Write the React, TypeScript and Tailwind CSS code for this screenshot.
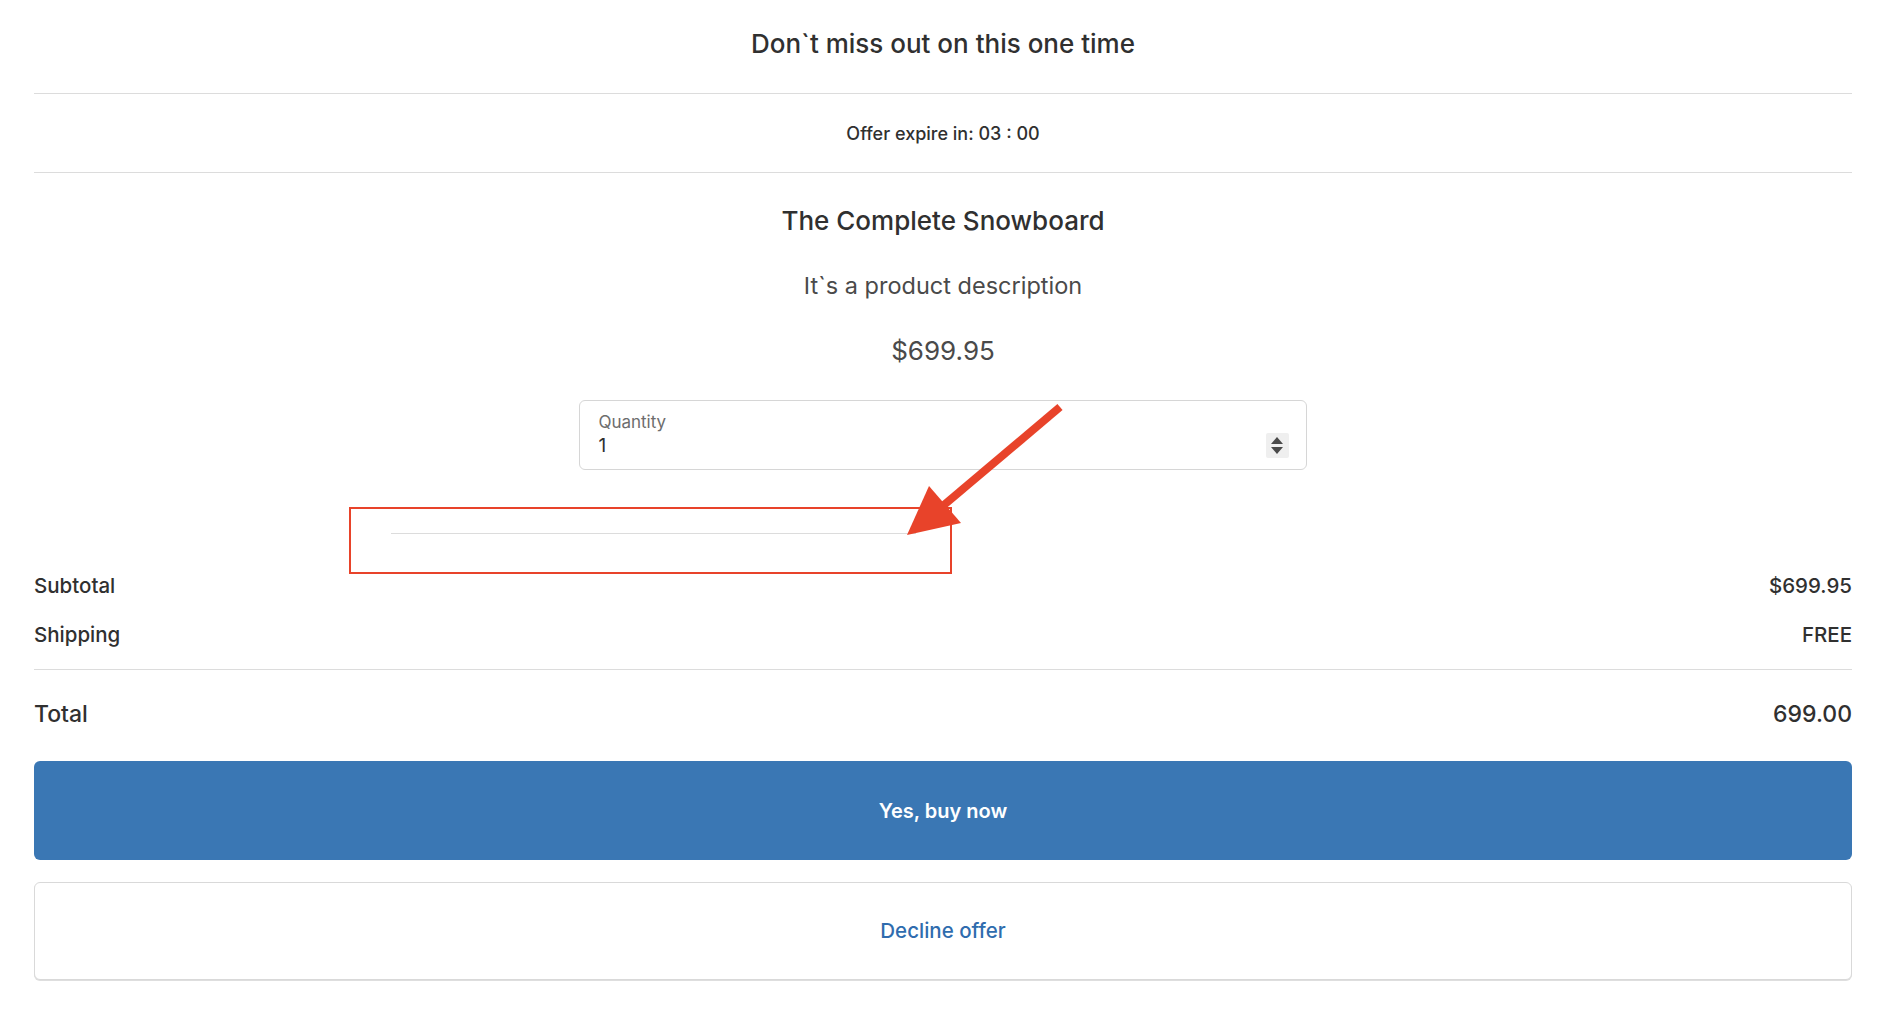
import { useState } from "react";

function Spinner() {
  return (
    <div className="mt-[32px] flex h-[25px] w-[23px] flex-col items-center justify-center gap-[3px] rounded-[2px] bg-[#efefef]">
      <span className="h-0 w-0 border-x-[6px] border-b-[7px] border-x-transparent border-b-[#4a4a4a]" />
      <span className="h-0 w-0 border-x-[6px] border-t-[7px] border-x-transparent border-t-[#4a4a4a]" />
    </div>
  );
}

function SummaryRow({ label, value, big }: { label: string; value: string; big?: boolean }) {
  return (
    <div
      className={
        big
          ? "flex items-center justify-between text-[23px] leading-[28px] font-medium text-[#303030]"
          : "flex items-center justify-between text-[20.5px] leading-[24px] font-medium text-[#303030]"
      }
    >
      <span>{label}</span>
      <span>{value}</span>
    </div>
  );
}

export default function App() {
  const [quantity] = useState(1);

  return (
    <main className="relative min-h-screen bg-white font-['Inter',sans-serif] text-[#303030]">
      <div className="ml-[34px] mr-[36px]">
        <header className="border-b border-[#dcdcdc] pt-[29px] pb-[34px] text-center text-[26px] leading-[30px] font-medium">
          Don`t miss out on this one time
        </header>

        <div className="border-b border-[#dcdcdc] pt-[28px] pb-[26px] text-center text-[18px] leading-[24px] font-medium">
          Offer expire in: 03 : 00
        </div>

        <section className="flex flex-col items-center">
          <h1 className="mt-[33px] text-[26px] leading-[30px] font-medium">The Complete Snowboard</h1>
          <p className="mt-[36px] text-[23.5px] leading-[28px] text-[#4a4a4a]">It`s a product description</p>
          <p className="mt-[36px] text-[26px] leading-[30px] text-[#4a4a4a]">$699.95</p>

          <div className="mt-[34px] flex h-[70px] w-2/5 items-start justify-between rounded-[6px] border border-[#d6d6d6] pl-[18px] pr-[17px]">
            <div className="mt-[11px] flex flex-col">
              <span className="text-[17px] leading-[20px] text-[#6d6d6d]">Quantity</span>
              <span className="mt-[3px] text-[19px] leading-[22px] text-[#303030]">{quantity}</span>
            </div>
            <Spinner />
          </div>
        </section>

        <div className="mt-[63px] ml-[357px] h-px w-[525px] bg-[#dcdcdc]" />

        <div className="mt-[40px] flex flex-col gap-[25px]">
          <SummaryRow label="Subtotal" value="$699.95" />
          <SummaryRow label="Shipping" value="FREE" />
        </div>

        <div className="mt-[22px] h-px bg-[#dcdcdc]" />

        <div className="mt-[30px]">
          <SummaryRow label="Total" value="699.00" big />
        </div>

        <button className="mt-[33px] flex h-[99px] w-full items-center justify-center rounded-[6px] bg-[#3a77b4] text-[20px] font-semibold text-white">
          Yes, buy now
        </button>

        <button className="mt-[22px] flex h-[98px] w-full items-center justify-center rounded-[6px] border border-[#d9d9d9] bg-white text-[20.5px] font-medium text-[#2f6cae] shadow-[0_1px_0_#dedede]">
          Decline offer
        </button>
      </div>

      {/* annotation drawn over the screenshot */}
      <div className="pointer-events-none absolute left-[349px] top-[507px] h-[67px] w-[603px] border-2 border-[#e8432a]" />
      <svg className="pointer-events-none absolute left-0 top-0" width="1888" height="1012">
        <line x1="1060" y1="407" x2="938" y2="510" stroke="#e8432a" strokeWidth="8" />
        <polygon points="907,535 929,486 961,523" fill="#e8432a" />
      </svg>
    </main>
  );
}
